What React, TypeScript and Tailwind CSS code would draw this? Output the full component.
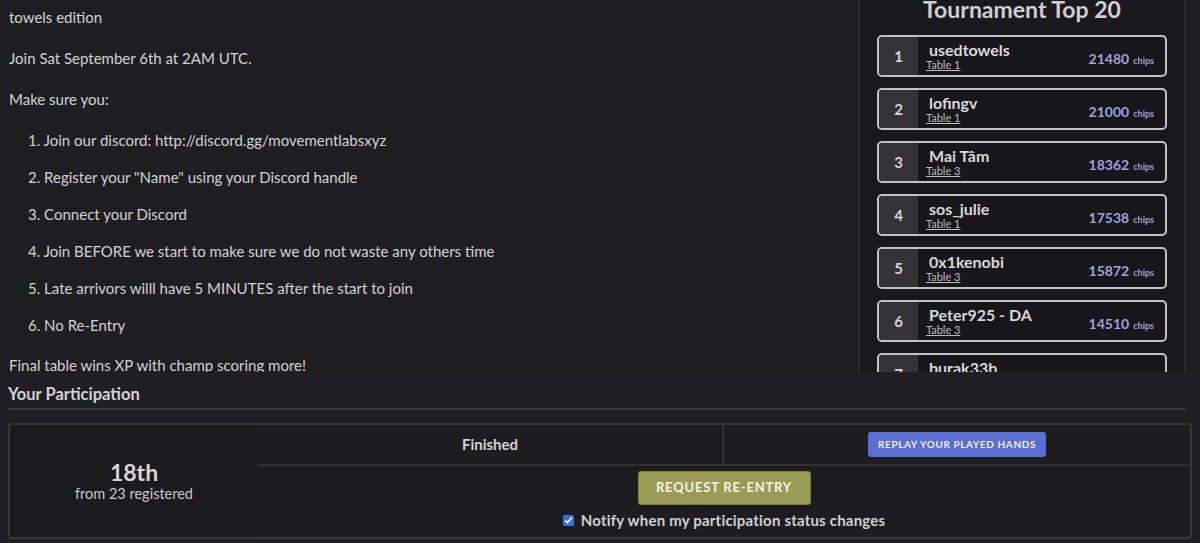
import { FunctionComponent } from "react";

const players = [
  { rank: 1, name: "usedtowels", table: "Table 1", chips: 21480 },
  { rank: 2, name: "lofingv", table: "Table 1", chips: 21000 },
  { rank: 3, name: "Mai Tâm", table: "Table 3", chips: 18362 },
  { rank: 4, name: "sos_julie", table: "Table 1", chips: 17538 },
  { rank: 5, name: "0x1kenobi", table: "Table 3", chips: 15872 },
  { rank: 6, name: "Peter925 - DA", table: "Table 3", chips: 14510 },
  { rank: 7, name: "burak33b", table: "Table 2", chips: 14000 },
];

const rules = [
  "Join our discord: http://discord.gg/movementlabsxyz",
  'Register your "Name" using your Discord handle',
  "Connect your Discord",
  "Join BEFORE we start to make sure we do not waste any others time",
  "Late arrivors willl have 5 MINUTES after the start to join",
  "No Re-Entry",
];

const App: FunctionComponent = () => {
  return (
    <div className="w-[1200px] h-[543px] overflow-hidden bg-[#1e1d22] text-[#d2d2d4] font-['Lato',sans-serif] flex flex-col">
      {/* top: description + leaderboard */}
      <section className="flex h-[372px] overflow-hidden">
        <div className="flex-1 pl-[9px] pt-[5px] text-[15px] leading-[24px]">
          <p className="mb-[17px]">towels edition</p>
          <p className="mb-[17px]">Join Sat September 6th at 2AM UTC.</p>
          <p className="mb-[17px]">Make sure you:</p>
          <ol className="pl-[19px] mb-[17px]">
            {rules.map((r, i) => (
              <li key={i} className="mb-[13px]">
                {i + 1}. {r}
              </li>
            ))}
          </ol>
          <p className="-mt-[18px] pt-[17px]">Final table wins XP with champ scoring more!</p>
        </div>

        <div className="w-[328px] mr-[14px] border-x-2 border-[#2c2b30] bg-[#19181d] flex flex-col items-center">
          <h2 className="text-[23px] font-bold leading-[20px] -mt-[1px] text-[#cfcfd1]">Tournament Top 20</h2>
          <div className="flex flex-col gap-[11px] mt-[16px]">
            {players.map((p) => (
              <div
                key={p.rank}
                className="w-[290px] h-[42px] flex border-2 border-[#c2c2c4] rounded-[5px] overflow-hidden bg-[#17161b]"
              >
                <div className="w-[39px] bg-[#333236] flex items-center justify-center text-[15px] font-bold text-[#d6d6d8]">
                  {p.rank}
                </div>
                <div className="flex-1 flex items-center justify-between pl-[8px] pr-[11px]">
                  <div className="flex flex-col">
                    <span className="text-[16px] font-bold leading-[18px] pl-[3px] text-[#d8d8da]">{p.name}</span>
                    <span className="text-[11px] leading-[12px] underline text-[#bdbdc0]">{p.table}</span>
                  </div>
                  <div className="flex items-baseline gap-[4px] mt-[4px]">
                    <span className="text-[14px] font-bold text-[#a69fdc]">{p.chips}</span>
                    <span className="text-[9px] font-bold text-[#a69fdc]">chips</span>
                  </div>
                </div>
              </div>
            ))}
          </div>
        </div>
      </section>

      {/* bottom: participation */}
      <section className="flex-1 bg-[#1f1e24] px-[8px] pt-[12px]">
        <h3 className="text-[16.5px] font-bold leading-[20px] text-[#d4d4d6]">Your Participation</h3>
        <div className="h-[2px] bg-[#38373c] mt-[4px] mr-[6px]" />
        <div className="mt-[13px] h-[116px] flex border-2 border-[#37363b] rounded-[4px] overflow-hidden">
          <div className="w-[248px] bg-[#1b1a1f] flex flex-col items-center justify-center">
            <span className="text-[23px] font-bold leading-[26px] text-[#d6d6d8]">18th</span>
            <span className="text-[14.5px] leading-[18px] text-[#c8c8ca]">from 23 registered</span>
          </div>
          <div className="flex-1 bg-[#1d1d1f] flex flex-col">
            <div className="h-[41px] grid grid-cols-2 border-b-2 border-[#303033]">
              <div className="flex items-center justify-center border-r-2 border-[#303033] text-[15px] font-bold text-[#d2d2d4]">
                Finished
              </div>
              <div className="flex items-center justify-center">
                <button className="h-[25px] px-[10px] rounded-[3px] bg-[#5b6ed1] text-[10px] font-bold tracking-[0.6px] text-[#eef0ff]">
                  REPLAY YOUR PLAYED HANDS
                </button>
              </div>
            </div>
            <div className="flex-1 flex flex-col items-center pt-[5px]">
              <button className="w-[173px] h-[34px] rounded-[3px] bg-[#9a9c56] border border-[#7d7f45] text-[13px] font-bold tracking-[0.8px] text-[#f2f2e6]">
                REQUEST RE-ENTRY
              </button>
              <label className="flex items-center gap-[7px] mt-[4px] text-[15px] font-bold tracking-[0.2px] text-[#d0d0d2]">
                <input type="checkbox" defaultChecked className="w-[11px] h-[11px] accent-[#2f6fe8]" />
                Notify when my participation status changes
              </label>
            </div>
          </div>
        </div>
      </section>
    </div>
  );
};

export default App;
